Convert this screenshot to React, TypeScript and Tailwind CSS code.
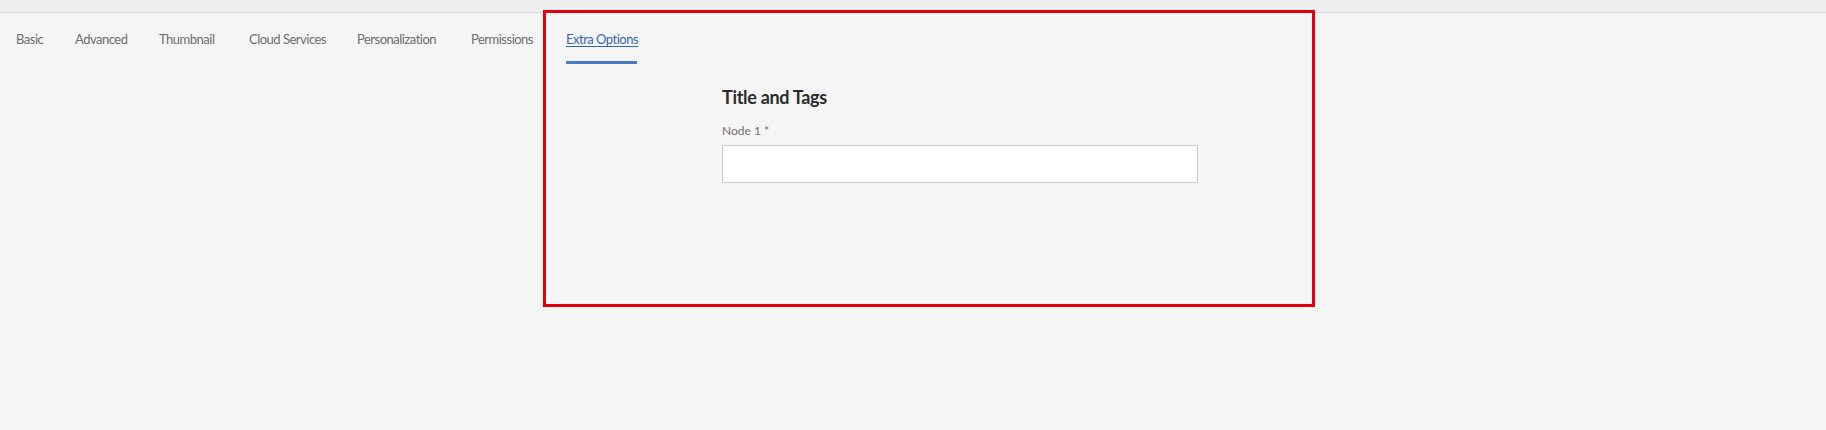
import React from 'react';

// widths read off the reference so the tab row lands where it should
const tabs = [
    { label: 'Basic', w: 'w-[26px]' },
    { label: 'Advanced', w: 'w-[51px]' },
    { label: 'Thumbnail', w: 'w-[57px]' },
    { label: 'Cloud Services', w: 'w-[75px]' },
    { label: 'Personalization', w: 'w-[81px]' },
    { label: 'Permissions', w: 'w-[62px]' },
    { label: 'Extra Options', w: 'w-[71px]' },
];

export default function App() {
    const active = 'Extra Options';

    return (
        <div className="relative w-full h-[430px] bg-[#f5f5f5] overflow-hidden" style={{ fontFamily: 'Lato, "Open Sans", sans-serif' }}>
            {/* top strip */}
            <div className="h-[13px] bg-[#eeeeee] border-b border-[#dcdcdc]" />

            {/* tab list */}
            <div className="flex pl-[16px] gap-[33px]">
                {tabs.map((t) => (
                    <div
                        key={t.label}
                        className={
                            t.label === active
                                ? `${t.w} whitespace-nowrap pt-[16px] pb-[12px] border-b-[3px] border-[#4a7bc8] text-[13px] leading-[20px] text-[#3566b8] underline underline-offset-2 tracking-[-0.5px]`
                                : `${t.w} whitespace-nowrap pt-[16px] pb-[12px] border-b-[3px] border-transparent text-[13px] leading-[20px] text-[#6e6e6e] tracking-[-0.5px]`
                        }
                    >
                        {t.label}
                    </div>
                ))}
            </div>

            {/* form */}
            <div className="ml-[722px] w-[476px] mt-[21px]">
                <h2 className="text-[18px] leading-[24px] font-bold text-[#2c2c2c] tracking-[-0.3px]">Title and Tags</h2>
                <label className="block mt-[14px] mb-[6px] text-[12px] leading-[16px] text-[#6f6f6f]">Node 1 *</label>
                <input type="text" className="block w-full h-[38px] bg-white border border-[#cacaca] outline-none px-2" />
            </div>

            {/* annotation frame */}
            <div className="absolute left-[543px] top-[10px] w-[772px] h-[297px] border-[3px] border-[#e2000c] pointer-events-none" />
        </div>
    );
}
